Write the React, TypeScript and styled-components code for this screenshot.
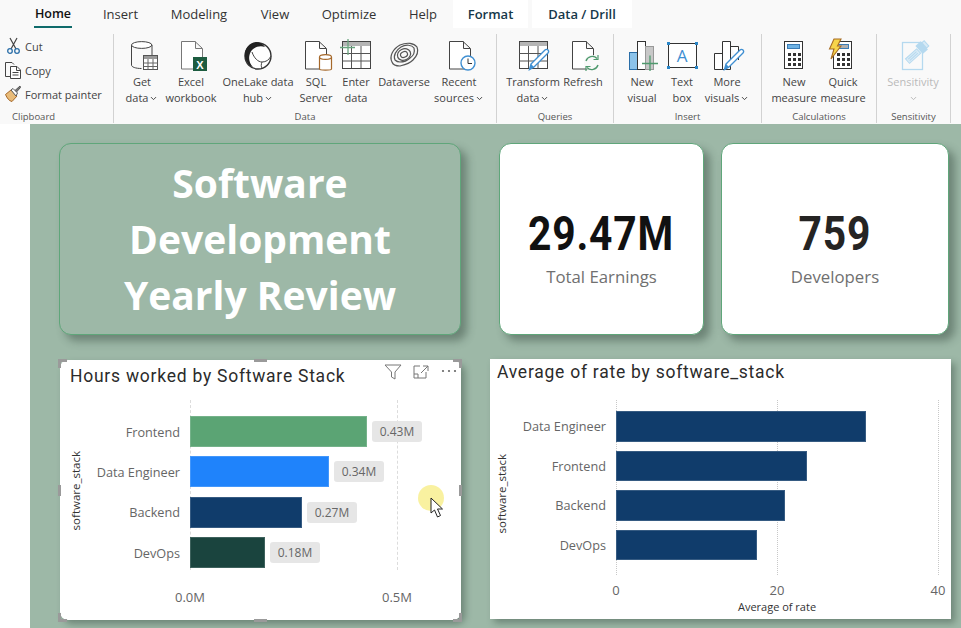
import React from 'react';
import styled, { createGlobalStyle, css } from 'styled-components';
import { ChevronDown } from 'lucide-react';

const GlobalStyle = createGlobalStyle`
  html, body {
    margin: 0;
    padding: 0;
    width: 961px;
    height: 628px;
    overflow: hidden;
    background: #fff;
    font-family: "Open Sans", "Noto Sans", sans-serif;
  }
  * { box-sizing: border-box; }
`;

const DIN_FONT = `"Roboto", "Liberation Sans", sans-serif`;

const Page = styled.div`
  width: 961px;
  height: 628px;
  display: flex;
  flex-direction: column;
  overflow: hidden;
`;

/* ribbon */
const Ribbon = styled.header`
  height: 124px;
  flex: none;
  background: #f9f9f9;
  display: flex;
  flex-direction: column;
`;

const TabBar = styled.nav`
  height: 28px;
  display: flex;
  padding-left: 34px;
`;

const Tab = styled.div<{ $active?: boolean; $ctx?: boolean; $width: number; $gap: number }>`
  width: ${(p) => p.$width}px;
  margin-right: ${(p) => p.$gap}px;
  height: 28px;
  display: flex;
  align-items: center;
  justify-content: center;
  white-space: nowrap;
  font-size: 13px;
  color: #333;
  ${(p) => p.$active && css`
    font-weight: 600;
    font-size: 12.5px;
    color: #111;
    border-bottom: 2px solid #0f6b6b;
  `}
  ${(p) => p.$ctx && css`
    background: #fff;
    font-weight: 600;
    color: #16384a;
  `}
`;

const Groups = styled.div`
  flex: 1;
  display: flex;
  padding-top: 6px;
  padding-bottom: 1px;
`;

const Group = styled.section<{ $width: number }>`
  width: ${(p) => p.$width}px;
  flex: none;
  display: flex;
  flex-direction: column;
  border-right: 1px solid #d2d2d2;
`;

const GroupBody = styled.div<{ $pad?: number }>`
  flex: 1;
  display: flex;
  padding-left: ${(p) => p.$pad || 0}px;
`;

const BigBody = styled(GroupBody)`
  padding-top: 6px;
`;

const GroupName = styled.div<{ $left?: boolean }>`
  height: 12px;
  line-height: 12px;
  font-size: 9.5px;
  color: #555;
  text-align: ${(p) => (p.$left ? 'left' : 'center')};
  padding-left: ${(p) => (p.$left ? '12px' : '0')};
`;

const SmallList = styled.div`
  display: flex;
  flex-direction: column;
`;

const SmallBtn = styled.div`
  height: 24px;
  display: flex;
  align-items: center;
  gap: 4px;
  padding-left: 5px;
  font-size: 11px;
  color: #444;
  white-space: nowrap;
`;

const BigBtn = styled.div<{ $width: number; $muted?: boolean }>`
  width: ${(p) => p.$width}px;
  flex: none;
  display: flex;
  flex-direction: column;
  align-items: center;
  font-size: 11px;
  line-height: 16px;
  color: ${(p) => (p.$muted ? '#b9b9b9' : '#444')};
  white-space: nowrap;
  svg.big {
    display: block;
    margin-bottom: 4px;
    overflow: visible;
  }
`;

const Line = styled.span`
  height: 16px;
  display: inline-flex;
  align-items: center;
  gap: 1px;
`;

/* canvas */
const Workspace = styled.main`
  flex: 1;
  display: flex;
  background: #fff;
  min-height: 0;
`;

const Gutter = styled.div`
  width: 30px;
  flex: none;
  background: #fff;
`;

const Canvas = styled.div`
  flex: 1;
  background: #9db8a7;
  padding: 19px 0 0 29px;
  display: flex;
  flex-direction: column;
`;

const TopRow = styled.div`
  display: flex;
  gap: 38px;
  height: 192px;
  flex: none;
`;

const KpiRow = styled.div`
  display: flex;
  gap: 17px;
`;

const raised = css`
  border: 1px solid #5fa67a;
  border-radius: 12px;
  box-shadow: 6px 6px 9px rgba(40, 60, 50, 0.42);
`;

const TitleCard = styled.div`
  ${raised}
  width: 402px;
  background: #9db8a7;
  color: #fff;
  text-align: center;
  font-size: 39px;
  font-weight: 700;
  line-height: 56px;
  padding-top: 11px;
`;

const KpiCard = styled.div<{ $width: number }>`
  ${raised}
  width: ${(p) => p.$width}px;
  background: #fff;
  display: flex;
  flex-direction: column;
  align-items: center;
  padding-top: 62px;
`;

const KpiValue = styled.div<{ $color: string }>`
  font-family: ${DIN_FONT};
  font-weight: 700;
  font-size: 48px;
  line-height: 56px;
  letter-spacing: 1px;
  transform: scaleX(0.85);
  color: ${(p) => p.$color};
`;

const KpiLabel = styled.div`
  font-size: 16.8px;
  line-height: 22px;
  margin-top: 4px;
  color: #707070;
`;

const BottomRow = styled.div`
  display: flex;
  gap: 29px;
  margin-top: 24px;
  padding-left: 1px;
`;

const ChartCard = styled.article<{ $width: number; $selected?: boolean; $drop: number }>`
  position: relative;
  width: ${(p) => p.$width}px;
  height: 260px;
  flex: none;
  margin-top: ${(p) => p.$drop}px;
  background: #fff;
  box-shadow: 4px 4px 7px rgba(40, 60, 50, 0.4);
  border-radius: ${(p) => (p.$selected ? '8px' : '0')};
  color: #444;
`;

const ChartHeader = styled.div<{ $height: number; $padLeft: number; $padTop: number }>`
  height: ${(p) => p.$height}px;
  padding: ${(p) => p.$padTop}px 0 0 ${(p) => p.$padLeft}px;
`;

const ChartTitle = styled.h2`
  margin: 0;
  font-family: ${DIN_FONT};
  font-weight: 400;
  font-size: 17.5px;
  line-height: 24px;
  letter-spacing: 0.75px;
  color: #2b2b2b;
  white-space: nowrap;
`;

const PlotRow = styled.div<{ $padLeft: number }>`
  display: flex;
  padding-left: ${(p) => p.$padLeft}px;
`;

const AxisName = styled.div`
  width: 14px;
  flex: none;
  writing-mode: vertical-rl;
  transform: rotate(180deg);
  align-self: center;
  margin-bottom: -12px;
  text-align: center;
  font-size: 11.5px;
  line-height: 14px;
  color: #333;
`;

const Rows = styled.div<{ $height: number; $padTop: number; $gap: number }>`
  position: relative;
  height: ${(p) => p.$height}px;
  padding-top: ${(p) => p.$padTop}px;
  display: flex;
  flex-direction: column;
  gap: ${(p) => p.$gap}px;
`;

const GridLine = styled.div<{ $left: number; $dot?: boolean }>`
  position: absolute;
  top: 0;
  bottom: 0;
  left: ${(p) => p.$left}px;
  width: 0;
  border-left: 1px ${(p) => (p.$dot ? 'dotted #c8c8c8' : 'dashed #dcdcdc')};
`;

const BarRow = styled.div<{ $height: number }>`
  position: relative;
  height: ${(p) => p.$height}px;
  display: flex;
  align-items: center;
`;

const BarLabel = styled.div`
  width: 97px;
  margin-right: 10px;
  text-align: right;
  font-size: 12.7px;
  color: #666;
  white-space: nowrap;
`;

const Bar = styled.div<{ $width: number; $color: string }>`
  width: ${(p) => p.$width}px;
  height: 100%;
  background: ${(p) => p.$color};
  box-shadow: inset 0 0 0 1px rgba(255, 255, 255, 0.16);
`;

const ValuePill = styled.div`
  margin-left: 5px;
  width: 50px;
  height: 21px;
  border-radius: 3px;
  background: rgba(228, 228, 228, 0.92);
  display: flex;
  align-items: center;
  justify-content: center;
  font-size: 12px;
  color: #666;
`;

const Ticks = styled.div<{ $left: number; $width: number; $top: number }>`
  margin: ${(p) => p.$top}px 0 0 ${(p) => p.$left}px;
  width: ${(p) => p.$width}px;
  display: flex;
  justify-content: space-between;
`;

const Tick = styled.div`
  width: 0;
  display: flex;
  justify-content: center;
  font-size: 13px;
  line-height: 18px;
  color: #666;
  white-space: nowrap;
`;

const ValueAxisName = styled.div<{ $left: number; $width: number }>`
  margin-left: ${(p) => p.$left}px;
  width: ${(p) => p.$width}px;
  text-align: center;
  font-size: 11px;
  line-height: 16px;
  color: #333;
`;

/* stuff over the selected visual */
const VisualTools = styled.div`
  position: absolute;
  top: 4px;
  right: 3px;
  display: flex;
  gap: 10px;
  align-items: center;
`;

const handleSpots = {
  top: 'top: -1px; left: 194px; width: 13px; height: 3px;',
  bottom: 'bottom: -2px; left: 194px; width: 13px; height: 3px;',
  left: 'left: -2px; top: 125px; width: 3px; height: 11px;',
  right: 'right: -1px; top: 125px; width: 3px; height: 11px;',
  tl: 'top: -1px; left: -2px; width: 9px; height: 9px; border-width: 3px 0 0 3px;',
  tr: 'top: -1px; right: -1px; width: 9px; height: 9px; border-width: 3px 3px 0 0;',
  bl: 'bottom: -2px; left: -2px; width: 9px; height: 9px; border-width: 0 0 3px 3px;',
  br: 'bottom: -2px; right: -1px; width: 9px; height: 9px; border-width: 0 3px 3px 0;',
};

const Handle = styled.div<{ $spot: keyof typeof handleSpots }>`
  position: absolute;
  ${(p) => handleSpots[p.$spot]}
  ${(p) =>
    p.$spot.length === 2
      ? 'border-style: solid; border-color: #9a9a9a;'
      : 'background: #9a9a9a;'}
`;

const Pointer = styled.div`
  position: absolute;
  left: 358px;
  top: 125px;
  width: 26px;
  height: 26px;
  border-radius: 50%;
  background: rgba(248, 240, 150, 0.9);
  svg {
    position: absolute;
    left: 12px;
    top: 12px;
    overflow: visible;
  }
`;

/* icons, 30x30 box on the button centre */
const Big = ({ children }: { children: React.ReactNode }) => (
  <svg className="big" width="30" height="30" viewBox="0 0 30 30" fill="none">
    {children}
  </svg>
);

const Doc = ({ x = 5, stroke = '#444' }: { x?: number; stroke?: string }) => (
  <path d={`M${x}.5 1.5H${x + 14}L${x + 21}.5 8.5V29H${x}.5ZM${x + 14}.5 1.5V8.5H${x + 21}`} stroke={stroke} fill="#fff" />
);

const TableGrid = () => (
  <>
    <rect x="1.5" y="1.5" width="28" height="27" fill="#fff" stroke="#444" />
    <rect x="2" y="2" width="27" height="4" fill="#b5b5b5" />
    <path d="M1.5 13.5H29.5M1.5 21H29.5M10.5 6V28M20 6V28" stroke="#555" />
  </>
);

const Pencil = ({ dx = 0 }: { dx?: number }) => (
  <g transform={`translate(${dx} 0)`}>
    <path d="M13 24L27 10a2 2 0 0 1 3 3L16 27l-4.5 2.5Z" fill="#fff" stroke="#3f8fd2" strokeWidth="1.4" />
    <path d="M13 24l3 3-4.5 2.5Z" fill="#3f8fd2" />
  </g>
);

const calcDots = [0, 1, 2].flatMap((r) => [0, 1, 2].map((c) => [9 + c * 5, 13 + r * 5]));

const Calc = ({ display }: { display: string }) => (
  <>
    <rect x="5.5" y="1.5" width="18" height="27" fill="#fff" stroke="#333" />
    <rect x="8.5" y="4.5" width="12" height="4" fill={display} stroke="#3b7cb5" />
    {calcDots.map(([x, y]) => (
      <rect key={`${x}-${y}`} x={x} y={y} width="3" height="3" fill="#333" />
    ))}
  </>
);

const GetDataIcon = () => (
  <Big>
    <path d="M4.5 5V25c0 2 4 3.5 10 3.5M25 5v10" stroke="#444" />
    <ellipse cx="14.7" cy="5" rx="10.2" ry="3.4" fill="#fff" stroke="#444" />
    <rect x="16.5" y="15.5" width="14" height="14" fill="#fff" stroke="#555" />
    <rect x="17" y="16" width="13" height="3" fill="#999" />
    <path d="M16.5 23H30.5M16.5 26.5H30.5M21 19V29.5M26 19V29.5" stroke="#666" />
  </Big>
);

const ExcelIcon = () => (
  <Big>
    <Doc x={5} stroke="#777" />
    <rect x="17" y="17" width="14" height="14" fill="#1d5c40" />
    <text x="24" y="28.5" textAnchor="middle" fontSize="11" fontWeight="700" fill="#fff" fontFamily="Liberation Sans">X</text>
  </Big>
);

const OneLakeIcon = () => (
  <Big>
    <circle cx="15" cy="16" r="13" stroke="#333" strokeWidth="1.4" fill="#fff" />
    <path d="M13 2c-8 1-12 8-11 15 1 5 4 9 8 10C5 22 5 15 9 10c3-3 8-5 13-3-2-3-5-5-9-5Z" fill="#222" />
    <path d="M9 12c2 6 6 10 10 10 4 0 7-2 9-6M19 22c-1 2-1 5 0 6" stroke="#444" />
  </Big>
);

const SqlIcon = () => (
  <Big>
    <Doc x={4} />
    <path d="M18.5 17V29c0 1.5 12 1.5 12 0V17" fill="#fff" stroke="#a5682a" strokeWidth="1.2" />
    <ellipse cx="24.5" cy="17" rx="6" ry="2.4" fill="#fff" stroke="#a5682a" strokeWidth="1.2" />
  </Big>
);

const EnterDataIcon = () => (
  <Big>
    <TableGrid />
    <path d="M-1 7.5H14M7 -1V15" stroke="#6aa57f" strokeWidth="1.3" />
  </Big>
);

const DataverseIcon = () => (
  <Big>
    <g stroke="#555" strokeWidth="1.2" fill="none">
      <path d="M3 22c-3-6 1-13 8-17 7-3 14-2 17 2 2 5-1 10-4 13-4 4-9 5-13 6-4 0-7-1-8-4Z" />
      <path d="M6 20c-2-4 1-10 6-13 5-3 11-2 13 1 1 4-1 8-4 10-3 3-7 4-10 4-3 0-4-1-5-2Z" />
      <ellipse cx="15" cy="14.5" rx="6.8" ry="5.6" transform="rotate(-25 15 14.5)" />
      <ellipse cx="15" cy="14.5" rx="3.6" ry="2.8" transform="rotate(-25 15 14.5)" />
    </g>
  </Big>
);

const RecentIcon = () => (
  <Big>
    <Doc x={5} />
    <circle cx="24" cy="23" r="7" fill="#fff" stroke="#3f8fd2" strokeWidth="1.4" />
    <path d="M24 18.5V23.5H28" stroke="#333" />
  </Big>
);

const TransformIcon = () => (
  <Big>
    <TableGrid />
    <Pencil />
  </Big>
);

const RefreshIcon = () => (
  <Big>
    <Doc x={4} />
    <circle cx="24" cy="23" r="8" fill="#f9f9f9" />
    <path d="M18 21a6.5 6.5 0 0 1 11-2.5M30 25a6.5 6.5 0 0 1-11 2.5" stroke="#4f9a6e" strokeWidth="1.4" />
    <path d="M30 15v4.5h-4.5M18 31v-4.5h4.5" stroke="#4f9a6e" strokeWidth="1.2" />
  </Big>
);

const NewVisualIcon = () => (
  <Big>
    <rect x="2.5" y="12.5" width="8" height="17" fill="#8cc3ea" stroke="#2a6ea8" />
    <rect x="10.5" y="1.5" width="8" height="28" fill="#fff" stroke="#333" />
    <rect x="18.5" y="6.5" width="8" height="23" fill="#c8c8c8" stroke="#999" />
    <path d="M15 23.5H31M23 15.5V31" stroke="#4f9a6e" strokeWidth="1.3" />
  </Big>
);

const TextBoxIcon = () => (
  <Big>
    <rect x="1.5" y="3.5" width="28" height="24" fill="#fff" stroke="#333" />
    {[[0, 2], [28, 2], [0, 26], [28, 26]].map(([x, y]) => (
      <rect key={`${x}-${y}`} x={x} y={y} width="3" height="3" fill="#2a86c8" />
    ))}
    <text x="15" y="22" textAnchor="middle" fontSize="17" fill="#3f8fd2" fontFamily="Open Sans">A</text>
  </Big>
);

const MoreVisualsIcon = () => (
  <Big>
    <path d="M2.5 13.5H10.5V29.5H2.5ZM18.5 6.5H26.5V20M18.5 29.5H10.5V1.5H18.5Z" fill="#fff" stroke="#333" />
    <Pencil dx={1} />
  </Big>
);

const NewMeasureIcon = () => (
  <Big>
    <Calc display="#6eb2e4" />
  </Big>
);

const QuickMeasureIcon = () => (
  <Big>
    <Calc display="#b0b0b0" />
    <path d="M6 -1H13L9.5 6H13L3 19 6 9H1.5Z" fill="#f7d44a" stroke="#a86d24" strokeWidth="1.1" />
  </Big>
);

const SensitivityIcon = () => (
  <Big>
    <rect x="4.5" y="2.5" width="20" height="27" fill="none" stroke="#b5d9ef" strokeWidth="1.3" />
    <g transform="rotate(-42 17 13)">
      <rect x="6" y="11" width="15" height="6" fill="#d9ebf6" stroke="#b5d9ef" />
      <path d="M8 13H19M8 15H19" stroke="#b5d9ef" />
      <rect x="22" y="8" width="7" height="11" fill="#b5d9ef" />
      <rect x="29" y="10" width="3" height="7" fill="#d9ebf6" stroke="#b5d9ef" />
    </g>
  </Big>
);

const CutIcon = () => (
  <svg width="16" height="18" viewBox="0 0 16 18" fill="none">
    <path d="M5 1L11 12M12 1L6 12" stroke="#444" strokeWidth="1.2" />
    <circle cx="5" cy="14" r="2.3" stroke="#2a6ea8" strokeWidth="1.3" />
    <circle cx="12" cy="14" r="2.3" stroke="#2a6ea8" strokeWidth="1.3" />
  </svg>
);

const CopyIcon = () => (
  <svg width="16" height="17" viewBox="0 0 16 17" fill="none" stroke="#444">
    <path d="M5.5 14.5H.5V.5H7L9 2.5" />
    <path d="M5.5 4.5H12L15.5 8V16.5H5.5ZM11.5 4.5V8.5H15.5M7.5 10.5H13.5M7.5 13H13.5" fill="#fff" />
  </svg>
);

const PainterIcon = () => (
  <svg width="16" height="18" viewBox="0 0 16 18" fill="none">
    <path d="M0.5 9.5L6 5l6 6-5 5.5C4 16 2 13 0.5 9.5Z" fill="#e9bb78" stroke="#a5682a" />
    <path d="M6 5l2-1.5 4.5 4.5L11 11Z" fill="#fff" stroke="#555" />
    <path d="M10 5.5L15 1l.5 1.5L11.5 7" fill="#777" stroke="#555" />
  </svg>
);

const Chevron = ({ color = '#444' }: { color?: string }) => <ChevronDown size={9} color={color} strokeWidth={2.6} />;

type RibbonItem = {
  icon: React.ReactNode;
  lines: string[];
  width: number;
  chevron?: boolean;
};

type RibbonGroup = { name: string; width: number; pad: number; items: RibbonItem[] };

const ribbonGroups: RibbonGroup[] = [
  {
    name: 'Data',
    width: 383,
    pad: 4,
    items: [
      { icon: <GetDataIcon />, lines: ['Get', 'data'], width: 48, chevron: true },
      { icon: <ExcelIcon />, lines: ['Excel', 'workbook'], width: 50 },
      { icon: <OneLakeIcon />, lines: ['OneLake data', 'hub'], width: 84, chevron: true },
      { icon: <SqlIcon />, lines: ['SQL', 'Server'], width: 32 },
      { icon: <EnterDataIcon />, lines: ['Enter', 'data'], width: 48 },
      { icon: <DataverseIcon />, lines: ['Dataverse'], width: 48 },
      { icon: <RecentIcon />, lines: ['Recent', 'sources'], width: 62, chevron: true },
    ],
  },
  {
    name: 'Queries',
    width: 117,
    pad: 8,
    items: [
      { icon: <TransformIcon />, lines: ['Transform', 'data'], width: 56, chevron: true },
      { icon: <RefreshIcon />, lines: ['Refresh'], width: 44 },
    ],
  },
  {
    name: 'Insert',
    width: 148,
    pad: 8,
    items: [
      { icon: <NewVisualIcon />, lines: ['New', 'visual'], width: 40 },
      { icon: <TextBoxIcon />, lines: ['Text', 'box'], width: 40 },
      { icon: <MoreVisualsIcon />, lines: ['More', 'visuals'], width: 50, chevron: true },
    ],
  },
  {
    name: 'Calculations',
    width: 115,
    pad: 6,
    items: [
      { icon: <NewMeasureIcon />, lines: ['New', 'measure'], width: 52 },
      { icon: <QuickMeasureIcon />, lines: ['Quick', 'measure'], width: 46 },
    ],
  },
];

const tabs = [
  { label: 'Home', width: 38, gap: 31, active: true },
  { label: 'Insert', width: 35, gap: 32 },
  { label: 'Modeling', width: 58, gap: 32 },
  { label: 'View', width: 30, gap: 31 },
  { label: 'Optimize', width: 56, gap: 32 },
  { label: 'Help', width: 28, gap: 16 },
  { label: 'Format', width: 75, gap: 4, ctx: true },
  { label: 'Data / Drill', width: 100, gap: 0, ctx: true },
];

const hoursRows = [
  { label: 'Frontend', width: 177, color: '#5ba474', value: '0.43M' },
  { label: 'Data Engineer', width: 139, color: '#1f83fb', value: '0.34M' },
  { label: 'Backend', width: 112, color: '#103c6b', value: '0.27M' },
  { label: 'DevOps', width: 75, color: '#1a443e', value: '0.18M' },
];

const rateRows = [
  { label: 'Data Engineer', width: 250 },
  { label: 'Frontend', width: 191 },
  { label: 'Backend', width: 169 },
  { label: 'DevOps', width: 141 },
];

function RibbonBar() {
  return (
    <Ribbon>
      <TabBar>
        {tabs.map((t) => (
          <Tab key={t.label} $width={t.width} $gap={t.gap} $active={t.active} $ctx={t.ctx}>
            {t.label}
          </Tab>
        ))}
      </TabBar>
      <Groups>
        <Group $width={114}>
          <GroupBody>
            <SmallList>
              <SmallBtn><CutIcon />Cut</SmallBtn>
              <SmallBtn><CopyIcon />Copy</SmallBtn>
              <SmallBtn><PainterIcon />Format painter</SmallBtn>
            </SmallList>
          </GroupBody>
          <GroupName $left>Clipboard</GroupName>
        </Group>
        {ribbonGroups.map((g) => (
          <Group key={g.name} $width={g.width}>
            <BigBody $pad={g.pad}>
              {g.items.map((item) => (
                <BigBtn key={item.lines.join(' ')} $width={item.width}>
                  {item.icon}
                  {item.lines.map((line, i) => (
                    <Line key={line}>
                      {line}
                      {item.chevron && i === item.lines.length - 1 && <Chevron />}
                    </Line>
                  ))}
                </BigBtn>
              ))}
            </BigBody>
            <GroupName>{g.name}</GroupName>
          </Group>
        ))}
        <Group $width={74}>
          <BigBody $pad={10}>
            <BigBtn $width={52} $muted>
              <SensitivityIcon />
              <Line>Sensitivity</Line>
              <Line><Chevron color="#b9b9b9" /></Line>
            </BigBtn>
          </BigBody>
          <GroupName>Sensitivity</GroupName>
        </Group>
      </Groups>
    </Ribbon>
  );
}

function HoursChart() {
  return (
    <ChartCard $width={401} $drop={1} $selected>
      <ChartHeader $height={40} $padLeft={10} $padTop={4}>
        <ChartTitle>Hours worked by Software Stack</ChartTitle>
      </ChartHeader>
      <PlotRow $padLeft={9}>
        <AxisName>software_stack</AxisName>
        <Rows $height={170} $padTop={16} $gap={9.4}>
          <GridLine $left={107} />
          <GridLine $left={314} />
          {hoursRows.map((r) => (
            <BarRow key={r.label} $height={31}>
              <BarLabel>{r.label}</BarLabel>
              <Bar $width={r.width} $color={r.color} />
              <ValuePill>{r.value}</ValuePill>
            </BarRow>
          ))}
        </Rows>
      </PlotRow>
      <Ticks $left={130} $width={207} $top={18}>
        <Tick>0.0M</Tick>
        <Tick>0.5M</Tick>
      </Ticks>
      <VisualTools>
        <svg width="18" height="16" viewBox="0 0 18 16" fill="none" stroke="#777">
          <path d="M1 1H17L11 8V15L7.5 13V8Z" />
        </svg>
        <svg width="18" height="16" viewBox="0 0 18 16" fill="none" stroke="#777">
          <path d="M8 2H2V14H14V8M11 2H16V7M16 2L9 9M2 10H6V14" />
        </svg>
        <svg width="18" height="16" viewBox="0 0 18 16" fill="#666">
          <circle cx="3" cy="7" r="1.1" />
          <circle cx="9" cy="7" r="1.1" />
          <circle cx="15" cy="7" r="1.1" />
        </svg>
      </VisualTools>
      {(Object.keys(handleSpots) as (keyof typeof handleSpots)[]).map((spot) => (
        <Handle key={spot} $spot={spot} />
      ))}
      <Pointer>
        <svg width="14" height="21" viewBox="0 0 14 21">
          <path d="M1 1V16L4.5 13 7.5 20 10.5 18.5 7.5 12H12.5Z" fill="#fff" stroke="#222" />
        </svg>
      </Pointer>
    </ChartCard>
  );
}

function RateChart() {
  return (
    <ChartCard $width={461} $drop={0}>
      <ChartHeader $height={41} $padLeft={7} $padTop={1}>
        <ChartTitle>Average of rate by software_stack</ChartTitle>
      </ChartHeader>
      <PlotRow $padLeft={5}>
        <AxisName>software_stack</AxisName>
        <Rows $height={175} $padTop={11} $gap={9}>
          <GridLine $left={107} $dot />
          <GridLine $left={268} $dot />
          <GridLine $left={429} $dot />
          {rateRows.map((r) => (
            <BarRow key={r.label} $height={30.5}>
              <BarLabel>{r.label}</BarLabel>
              <Bar $width={r.width} $color="#103c6b" />
            </BarRow>
          ))}
        </Rows>
      </PlotRow>
      <Ticks $left={126} $width={322} $top={6}>
        <Tick>0</Tick>
        <Tick>20</Tick>
        <Tick>40</Tick>
      </Ticks>
      <ValueAxisName $left={126} $width={322}>Average of rate</ValueAxisName>
    </ChartCard>
  );
}

export default function App() {
  return (
    <Page>
      <GlobalStyle />
      <RibbonBar />
      <Workspace>
        <Gutter />
        <Canvas>
          <TopRow>
            <TitleCard>
              Software
              <br />
              Development
              <br />
              Yearly Review
            </TitleCard>
            <KpiRow>
              <KpiCard $width={205}>
                <KpiValue $color="#111">29.47M</KpiValue>
                <KpiLabel>Total Earnings</KpiLabel>
              </KpiCard>
              <KpiCard $width={228}>
                <KpiValue $color="#252423">759</KpiValue>
                <KpiLabel>Developers</KpiLabel>
              </KpiCard>
            </KpiRow>
          </TopRow>
          <BottomRow>
            <HoursChart />
            <RateChart />
          </BottomRow>
        </Canvas>
      </Workspace>
    </Page>
  );
}
